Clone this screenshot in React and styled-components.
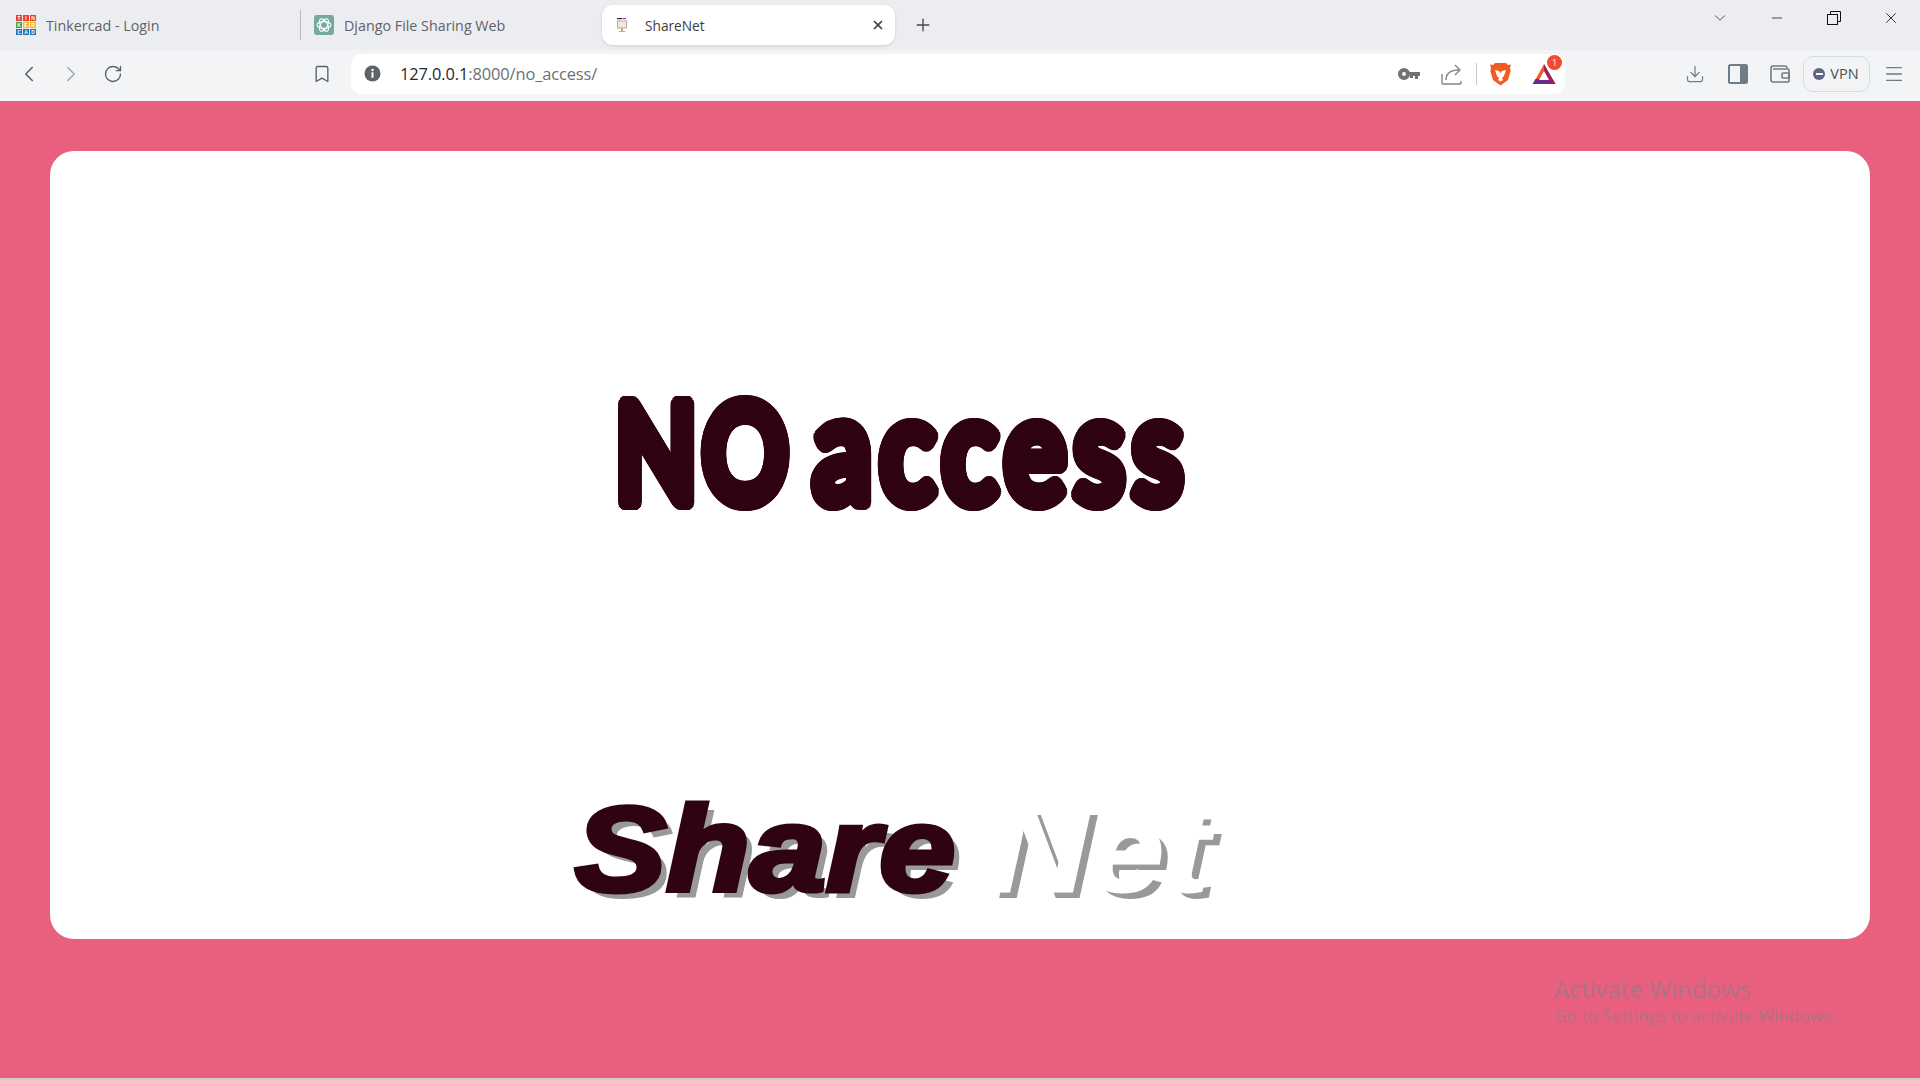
import React from 'react'
import styled, { createGlobalStyle } from 'styled-components'
import { ChevronLeft, ChevronRight, ChevronDown, RotateCw, Bookmark, Plus, X, Minus, Download, Menu } from 'lucide-react'

const GlobalStyle = createGlobalStyle`
  html, body { margin: 0; padding: 0; height: 100%; overflow: hidden; }
  #root { height: 100%; }
  * { box-sizing: border-box; }
`

// round outline, so the letters look blobby like the original display font
const ring = (radius, color) => {
  const out = []
  for (let i = 0; i < 24; i++) {
    const a = (i / 24) * Math.PI * 2
    out.push(`${(Math.cos(a) * radius).toFixed(2)}px ${(Math.sin(a) * radius).toFixed(2)}px 0 ${color}`)
  }
  return out.join(', ')
}

const Screen = styled.div`
  width: 1920px;
  height: 1080px;
  display: flex;
  flex-direction: column;
  font-family: "Open Sans", "Noto Sans", sans-serif;
  background: #cfcfcf;
  position: relative;
`

const TabBar = styled.div`
  height: 50px;
  background: #ecedf1;
  display: flex;
  align-items: flex-start;
  padding-left: 16px;
  flex-shrink: 0;
`

const Tab = styled.div`
  display: flex;
  align-items: center;
  height: 40px;
  margin-top: 5px;
  width: ${p => p.$width}px;
  gap: 10px;
  font-size: 14.3px;
  color: #5f6368;
  white-space: nowrap;
`

const ActiveTab = styled(Tab)`
  background: #fff;
  border-radius: 11px;
  color: #3c4043;
  font-size: 13.7px;
  padding: 0 10px 0 10px;
  box-shadow: 0 1px 3px rgba(0, 0, 0, 0.12);
  gap: 13px;
`

const TabDivider = styled.div`
  width: 1px;
  height: 30px;
  margin: 10px 13px 0 -1px;
  background: #b9bbc0;
`

const TabTitle = styled.span`
  flex: 1;
`

const NewTab = styled.div`
  width: 24px;
  height: 24px;
  margin: 13px 0 0 16px;
  color: #45484d;
  display: flex;
  align-items: center;
  justify-content: center;
`

const WindowControls = styled.div`
  margin-left: auto;
  padding-right: 1px;
  display: flex;
  align-items: center;
  height: 36px;
  color: #222;
`

const WindowButton = styled.div`
  width: 57px;
  height: 36px;
  display: flex;
  align-items: center;
  justify-content: center;
`

const Toolbar = styled.div`
  height: 51px;
  background: #f3f4f6;
  display: flex;
  align-items: center;
  padding: 0 0 4px 8px;
  flex-shrink: 0;
`

const NavButton = styled.div`
  width: 42px;
  height: 36px;
  display: flex;
  align-items: center;
  justify-content: center;
  color: ${p => (p.$muted ? '#a3a8ae' : '#5b6168')};
`

const BookmarkSlot = styled(NavButton)`
  margin-left: 167px;
`

const AddressBar = styled.div`
  width: 1214px;
  height: 40px;
  margin-left: 8px;
  background: #fff;
  border-radius: 11px;
  display: flex;
  align-items: center;
  padding: 0 0 0 13px;
`

const Url = styled.div`
  margin-left: 19px;
  font-size: 16.4px;
  color: #6b6f75;
  flex: 1;
  letter-spacing: -0.1px;
`

const UrlHost = styled.span`
  color: #26282b;
`

const AddressIcons = styled.div`
  display: flex;
  align-items: center;
  color: #6e7378;
`

const AddressIcon = styled.div`
  width: 43px;
  height: 30px;
  display: flex;
  align-items: center;
  justify-content: center;
  position: relative;
`

const AddressSep = styled.div`
  width: 1px;
  height: 22px;
  margin: 0 2px 0 3px;
  background: #c5c8cc;
`

const Badge = styled.span`
  position: absolute;
  top: -4px;
  right: 3px;
  width: 15px;
  height: 15px;
  border-radius: 50%;
  background: #f4492e;
  color: #fff;
  font-size: 9px;
  line-height: 15px;
  text-align: center;
`

const ToolIcons = styled.div`
  margin-left: 109px;
  display: flex;
  align-items: center;
  color: #6f7b85;
`

const ToolIcon = styled.div`
  width: 42.5px;
  height: 36px;
  display: flex;
  align-items: center;
  justify-content: center;
`

const VpnPill = styled.div`
  width: 67px;
  height: 36px;
  margin: 0 3px 0 1px;
  border: 1px solid #d4dbe2;
  border-radius: 10px;
  display: flex;
  align-items: center;
  justify-content: center;
  gap: 5px;
  font-size: 14.5px;
  color: #4a5058;
`

const VpnDot = styled.span`
  width: 12px;
  height: 12px;
  border-radius: 50%;
  background: #5d6780;
  display: flex;
  align-items: center;
  justify-content: center;
  &::after {
    content: '';
    width: 7px;
    height: 2px;
    background: #fff;
  }
`

const Page = styled.main`
  height: 977px;
  background: #e8607e;
  padding: 50px 50px 0;
  flex-shrink: 0;
`

const Card = styled.section`
  height: 788px;
  background: #fff;
  border-radius: 24px;
  display: flex;
  flex-direction: column;
  overflow: hidden;
`

const NoAccess = styled.h1`
  margin: 214px 0 0 565px;
  font-family: Lato, sans-serif;
  font-weight: 700;
  font-size: 137px;
  line-height: 160px;
  letter-spacing: 6px;
  word-spacing: -14px;
  color: #2f0410;
  white-space: nowrap;
  text-shadow: ${ring(7, '#2f0410')};
  transform: scaleX(0.78);
  transform-origin: left center;
`

const LowerWord = styled.span`
  font-size: 150px;
  letter-spacing: 9px;
`

const Brand = styled.h2`
  margin: 0 0 0 525px;
  margin-top: auto;
  padding-bottom: 28px;
  font-family: "Liberation Sans", Arial, sans-serif;
  font-style: italic;
  font-weight: 700;
  font-size: 120px;
  line-height: 124px;
  word-spacing: -4px;
  color: #fff;
  white-space: nowrap;
  -webkit-text-stroke: 3px #fff;
  text-shadow: 7px 7px 0 #999;
  transform: scaleX(1.14);
  transform-origin: left center;
`

const BrandDark = styled.span`
  color: #2f0410;
  -webkit-text-stroke: 5px #2f0410;
`

const Watermark = styled.div`
  position: absolute;
  left: 1554px;
  top: 974px;
  color: rgba(125, 130, 140, 0.58);
  pointer-events: none;
`

const WatermarkTitle = styled.div`
  font-size: 24px;
  line-height: 30px;
`

const WatermarkText = styled.div`
  font-size: 17.2px;
  line-height: 24px;
`

const TinkerGrid = styled.div`
  width: 20px;
  height: 20px;
  display: grid;
  grid-template-columns: repeat(3, 1fr);
  gap: 1px;
  flex-shrink: 0;
`

const TinkerCell = styled.span`
  background: ${p => p.$color};
  color: #fff;
  font: 700 5px/6px "Liberation Sans", sans-serif;
  text-align: center;
`

const tinkerCells = [
  ['T', '#e8402f'], ['I', '#e8402f'], ['N', '#e8402f'],
  ['K', '#3fa34d'], ['E', '#f2b632'], ['R', '#f2b632'],
  ['C', '#1c75bc'], ['A', '#1c75bc'], ['D', '#1c75bc'],
]

const TinkercadIcon = () => (
  <TinkerGrid>
    {tinkerCells.map(([l, c], i) => <TinkerCell key={i} $color={c}>{l}</TinkerCell>)}
  </TinkerGrid>
)

const ChatIcon = () => (
  <svg width="20" height="20" viewBox="0 0 20 20" style={{ flexShrink: 0 }}>
    <rect width="20" height="20" rx="3" fill="#74aa9c" />
    <g fill="none" stroke="#fff" strokeWidth="1.1">
      <ellipse cx="10" cy="10" rx="7" ry="3.4" />
      <ellipse cx="10" cy="10" rx="7" ry="3.4" transform="rotate(60 10 10)" />
      <ellipse cx="10" cy="10" rx="7" ry="3.4" transform="rotate(120 10 10)" />
    </g>
  </svg>
)

const ShareNetIcon = () => (
  <svg width="20" height="20" viewBox="0 0 20 20" style={{ flexShrink: 0 }}>
    <rect x="5" y="3" width="5" height="1.2" fill="#222" />
    <rect x="10.5" y="3" width="3.5" height="1.2" fill="#7a4cc2" />
    <rect x="5.5" y="6" width="9" height="7" fill="#f3e6e0" stroke="#c9a79b" />
    <rect x="9" y="13" width="2" height="3" fill="#c9a79b" />
    <rect x="7" y="16" width="6" height="1" fill="#c9a79b" />
  </svg>
)

const InfoDot = () => (
  <svg width="17" height="17" viewBox="0 0 17 17">
    <circle cx="8.5" cy="8.5" r="8" fill="#5f6368" />
    <rect x="7.5" y="7.3" width="2" height="5.5" fill="#fff" />
    <circle cx="8.5" cy="5" r="1.2" fill="#fff" />
  </svg>
)

const KeyIcon = () => (
  <svg width="22" height="14" viewBox="0 0 22 14" fill="#6e7378">
    <path d="M6 1a6 6 0 1 1-.01 12A6 6 0 0 1 6 1zm0 4a2 2 0 1 0 .01 4A2 2 0 0 0 6 5z" />
    <path d="M11 5h11v4h-2v3h-3V9h-2v2h-3z" />
  </svg>
)

const ShareIcon = () => (
  <svg width="21" height="22" viewBox="0 0 21 22" fill="none" stroke="#80858a" strokeWidth="1.4">
    <path d="M1 11v9a1 1 0 0 0 1 1h17a1 1 0 0 0 1-1v-2" />
    <path d="M5 17c0-6 4-10 13-10" />
    <path d="M14 2l5 5-5 5" />
  </svg>
)

const BraveIcon = () => (
  <svg width="21" height="24" viewBox="0 0 21 24">
    <path d="M5 1h11l2 2 3-.5-1 3.5.6 3-2.6 9-7.5 5.5L3 18 .4 9 1 6 0 2.500 3 3z" fill="#f15a22" />
    <path d="M5 8l4 1 1.500 2L12 9l4-1-2 6-2 2 1 2-2.500 1.500L8 18l1-2-2-2z" fill="#fff" />
  </svg>
)

const BatIcon = () => (
  <svg width="24" height="22" viewBox="0 0 24 22">
    <path d="M12 1L23 21H1z" fill="#f15a22" />
    <path d="M0.500 21h23l-3-5H3.500z" fill="#662d91" />
    <path d="M23.500 21L12 1v7l7 13z" fill="#9e1f63" />
    <path d="M12 8l5 9H7z" fill="#fff" />
  </svg>
)

const SidebarIcon = () => (
  <svg width="20" height="20" viewBox="0 0 20 20">
    <rect x="1" y="1" width="18" height="18" rx="1.5" fill="none" stroke="#6f7b85" strokeWidth="2" />
    <rect x="12" y="1" width="7" height="18" fill="#6f7b85" />
  </svg>
)

const WalletIcon = () => (
  <svg width="20" height="20" viewBox="0 0 20 20" fill="none" stroke="#6f7b85" strokeWidth="1.6">
    <path d="M3 5h15a1 1 0 0 1 1 1v11a1 1 0 0 1-1 1H3a2 2 0 0 1-2-2V4a2 2 0 0 1 2-2h12a2 2 0 0 1 2 2" />
    <rect x="12" y="9" width="7" height="5" rx="1" />
  </svg>
)

const RestoreIcon = () => (
  <svg width="14" height="14" viewBox="0 0 14 14" fill="none" stroke="#111" strokeWidth="1">
    <rect x="0.500" y="3.500" width="10" height="10" />
    <path d="M3.500 3.500V0.500h10v10h-3" />
  </svg>
)

const App = () => (
  <Screen>
    <GlobalStyle />
    <TabBar>
      <Tab $width={285}>
        <TinkercadIcon />
        <TabTitle>Tinkercad - Login</TabTitle>
      </Tab>
      <TabDivider />
      <Tab $width={288}>
        <ChatIcon />
        <TabTitle>Django File Sharing Web</TabTitle>
      </Tab>
      <ActiveTab $width={293}>
        <ShareNetIcon />
        <TabTitle>ShareNet</TabTitle>
        <X size={14} strokeWidth={3} color="#3c4043" />
      </ActiveTab>
      <NewTab><Plus size={20} strokeWidth={1.6} /></NewTab>
      <WindowControls>
        <WindowButton><ChevronDown size={18} strokeWidth={1} /></WindowButton>
        <WindowButton><Minus size={16} strokeWidth={1.2} /></WindowButton>
        <WindowButton><RestoreIcon /></WindowButton>
        <WindowButton><X size={18} strokeWidth={1.2} /></WindowButton>
      </WindowControls>
    </TabBar>
    <Toolbar>
      <NavButton><ChevronLeft size={26} strokeWidth={1.5} /></NavButton>
      <NavButton $muted><ChevronRight size={26} strokeWidth={1.5} /></NavButton>
      <NavButton><RotateCw size={20} strokeWidth={1.6} /></NavButton>
      <BookmarkSlot><Bookmark size={20} strokeWidth={1.6} /></BookmarkSlot>
      <AddressBar>
        <InfoDot />
        <Url><UrlHost>127.0.0.1</UrlHost>:8000/no_access/</Url>
        <AddressIcons>
          <AddressIcon><KeyIcon /></AddressIcon>
          <AddressIcon><ShareIcon /></AddressIcon>
          <AddressSep />
          <AddressIcon><BraveIcon /></AddressIcon>
          <AddressIcon><BatIcon /><Badge>1</Badge></AddressIcon>
        </AddressIcons>
      </AddressBar>
      <ToolIcons>
        <ToolIcon><Download size={20} strokeWidth={1.5} /></ToolIcon>
        <ToolIcon><SidebarIcon /></ToolIcon>
        <ToolIcon><WalletIcon /></ToolIcon>
        <VpnPill><VpnDot />VPN</VpnPill>
        <ToolIcon><Menu size={22} strokeWidth={1.5} /></ToolIcon>
      </ToolIcons>
    </Toolbar>
    <Page>
      <Card>
        <NoAccess>NO <LowerWord>access</LowerWord></NoAccess>
        <Brand><BrandDark>Share</BrandDark> Net</Brand>
      </Card>
    </Page>
    <Watermark>
      <WatermarkTitle>Activate Windows</WatermarkTitle>
      <WatermarkText>Go to Settings to activate Windows.</WatermarkText>
    </Watermark>
  </Screen>
)

export default App
